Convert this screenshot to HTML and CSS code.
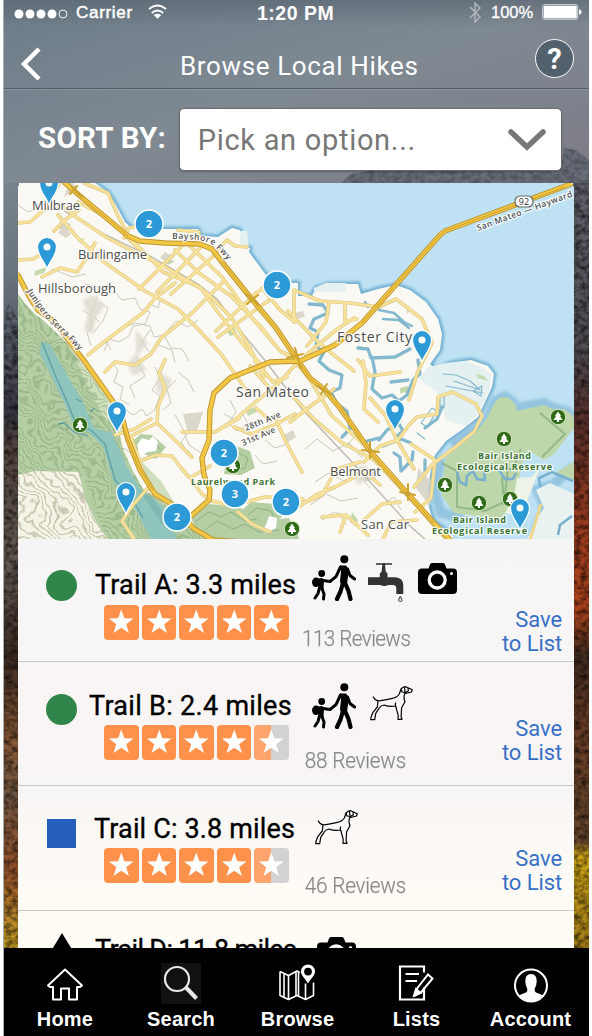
FILE: index.html
```html
<!DOCTYPE html>
<html lang="en">
<head>
<meta charset="utf-8">
<title>Browse Local Hikes</title>
<link rel="stylesheet" href="styles.css">
</head>
<body>
<svg class="defs" width="0" height="0" aria-hidden="true">
  <defs>
    <symbol id="star" viewBox="0 0 34 34"><path fill="#fff" d="M17 4.500l3.100 8.600 9 .3-7.200 5.500 2.700 8.800L17 22.500l-7.600 5.200 2.700-8.800-7.200-5.500 9-.3z"/></symbol>
    <symbol id="hikers" viewBox="0 0 44 46">
      <circle cx="32.300" cy="4.300" r="4"/><circle cx="9.700" cy="18.500" r="3.400"/><ellipse cx="4" cy="27.300" rx="4" ry="4.800"/>
      <path d="M28 10.500h6l3 4-2 14-6 1-1-3 1-10zM6 23.500l4-.5 2 2-.5 9-5 1z"/>
      <g fill="none" stroke="#000" stroke-linejoin="round" stroke-linecap="round"><path stroke-width="3" d="M28.500 12L24 21.700 18 26.500l-7-1M35.500 14l2.500 6.500 4.500 3.500"/><path stroke-width="4.200" d="M31 28l-2.500 8.500-3.500 7.500M33 28l3.500 8 2 8"/><path stroke-width="3" d="M7.500 33L6 38.500 3 43M10 33.500l2 5.500-.5 5"/></g>
    </symbol>
    <symbol id="tap" viewBox="0 0 37 39">
      <path fill="#333" d="M8 .3h6q1.700-.9 3.500 0H24v1.500h-7l.8 6.900 1.700 1.800v3.800H27q8.500.3 8.300 8.700v8h-7v-5.500q0-3.500-3-3.500h-4.800q-4 2-8.500 0H0v-7.700h11.800v-3.800l1.700-1.800.9-6.900H8z"/>
      <path d="M32.300 33.300l1.500 3a1.700 1.700 0 1 1-3 0z" fill="#ddd" stroke="#333" stroke-width="1"/>
    </symbol>
    <symbol id="camera" viewBox="0 0 39 31">
      <path d="M10.500 5.500l1.500-4Q12.500 0 14 0h11q1.500 0 2 1.500l1.500 4H35q4 0 4 4V27q0 4-4 4H4q-4 0-4-4V9.500q0-4 4-4z"/>
      <circle cx="19.200" cy="17" r="8" fill="none" stroke="#fff" stroke-width="3.300"/><circle cx="33.500" cy="10.500" r="1.500" fill="#fff"/>
    </symbol>
    <symbol id="dog" viewBox="-1 0 44 35">
      <path fill="none" stroke="#000" stroke-width="1.200" stroke-linejoin="round" stroke-linecap="round" d="M2.300 11q2 3.500 5 4 4-.5 14-2.700 5-1 7-4.300l1.700-5Q32 .6 34.700.7l2.300 1 4.300 2-.8 2.300-4 1-2.800.7q-1.500 4 .3 8l-3.400 6-.5 9.300 1 2.300H27l.2-4-1.500-5.500-1-3.800q-6 1.300-11.700-1-3.500.5-5 3.300l-3.300 5-1 6.400H-.3l.3-2.400 2-5 4.300-5.300q.5-3.500.7-6.700M24.700 20.700q-.8-2.500 0-3.700M33.500 1.500l.5 5 3.300-1.500-.3-3M30 3l1 3 3 .5"/>
    </symbol>
    <symbol id="pin" viewBox="-12 -34 24 36">
      <path fill="#2b9ad6" stroke="#fff" stroke-width="1.200" d="M0 0C-2-7-9.500-13-9.500-22A9.500 9.500 0 0 1 9.500-22C9.500-13 2-7 0 0z"/><circle cy="-22" r="3.500" fill="#fff"/>
    </symbol>
    <g id="tree"><circle r="7.700" fill="#2f6b17" stroke="#d7e6c4"/><path fill="#fff" d="M0-5.500L3-1H2l2.500 4H1v2h-2V3h-3.500L-2-1h-1z"/></g>
    <filter id="rock" x="0" y="0" width="100%" height="100%">
      <feTurbulence type="fractalNoise" baseFrequency=".16 .2" numOctaves="4" seed="8" result="n"/>
      <feColorMatrix in="n" values="0 0 0 0 0  0 0 0 0 0  0 0 0 0 0  1.800 0 0 0 -.6" result="m"/>
      <feComposite in="m" in2="SourceGraphic" operator="in"/>
    </filter>
    <filter id="warp" x="0" y="0" width="100%" height="100%">
      <feTurbulence type="fractalNoise" baseFrequency=".035" numOctaves="3" seed="4" result="t"/>
      <feDisplacementMap in="SourceGraphic" in2="t" scale="42" xChannelSelector="R" yChannelSelector="G"/>
    </filter>
    <filter id="soft"><feGaussianBlur stdDeviation="1.800"/></filter>
    <clipPath id="forest"><path d="M18 294q12 18 24 25l24 23 13 18 24 33 14 30 6 26 10 22 10 18 26 17 43 33H108l-13-28-11-34H18z"/></clipPath>
    <clipPath id="bluff"><path d="M18 475l18-4 43 1 6 27 13 27 13 18H18z"/></clipPath>
    <pattern id="contour" width="6" height="6" patternUnits="userSpaceOnUse" patternTransform="rotate(42)"><path d="M0 3H6" stroke="#719568" stroke-width="1"/></pattern>
    <pattern id="hills" width="7" height="7" patternUnits="userSpaceOnUse" patternTransform="rotate(55)"><path d="M0 3H7" stroke="#999779" stroke-width="1.200"/></pattern>
    <linearGradient id="sky" x2="1" y2="1"><stop stop-color="#6c7c88"/><stop offset=".5" stop-color="#7f8992"/><stop offset="1" stop-color="#7d7b86"/></linearGradient>
    <linearGradient id="left" x2="0" y2="1"><stop stop-color="#77838c"/><stop offset=".12" stop-color="#69737c"/><stop offset=".2" stop-color="#555a66"/><stop offset=".3" stop-color="#3b3b45"/><stop offset=".35" stop-color="#55453f"/><stop offset=".5" stop-color="#625852"/><stop offset=".62" stop-color="#3b2b21"/><stop offset=".73" stop-color="#875835"/><stop offset=".8" stop-color="#6e5540"/><stop offset=".9" stop-color="#9a552b"/><stop offset="1" stop-color="#c8a125"/></linearGradient>
    <linearGradient id="right" x2="0" y2="1"><stop stop-color="#62636d"/><stop offset=".22" stop-color="#504c52"/><stop offset=".32" stop-color="#5c3029"/><stop offset=".45" stop-color="#9d3d20"/><stop offset=".56" stop-color="#ab421c"/><stop offset=".62" stop-color="#3d2b20"/><stop offset=".7" stop-color="#6a3c25"/><stop offset=".86" stop-color="#66472c"/><stop offset=".88" stop-color="#d1a717"/><stop offset="1" stop-color="#a17b18"/></linearGradient>
  </defs>
</svg>

<div class="phone">
  <svg class="backdrop" viewBox="4 0 585 1036" aria-hidden="true">
    <path fill="url(#sky)" d="M4 0h585v183H4z"/>
    <path fill="url(#left)" d="M4 183h15v765H4z"/><path fill="url(#right)" d="M573 183h16v765h-16z"/>
    <path fill="#686d78" d="M341 183l10-9 26-5 185-8 2-13 12 2 13 10v23z"/>
    <path filter="url(#rock)" opacity=".3" d="M341 183l10-9 26-5 185-8 2-13 12 2 13 10v23z"/>
    <path filter="url(#rock)" opacity=".7" d="M4 315l5-12 10 20v625H4zM573 183h16v765h-16z"/>
  </svg>

  <header class="top">
    <div class="status">
      <svg class="signal" viewBox="0 0 54 12"><g fill="#fff"><circle cx="5" cy="6" r="4.500"/><circle cx="16" cy="6" r="4.500"/><circle cx="27" cy="6" r="4.500"/><circle cx="38" cy="6" r="4.500"/></g><circle cx="49" cy="6" r="4" fill="none" stroke="#fff" stroke-width=".9"/></svg>
      <span class="carrier">Carrier</span>
      <svg class="wifi" viewBox="0 0 20 15" fill="none" stroke="#fff" stroke-width="2"><path d="M1 5q9-7.500 18 0M4 9q6-5 12 0"/><path fill="#fff" stroke="none" d="M6 11.300q4-3 8 0L10 15z"/></svg>
      <strong class="clock">1:20 PM</strong>
      <svg class="bluetooth" viewBox="0 0 13 21" fill="none" stroke="#aeb5bb" stroke-width="1.500"><path d="M1 5l10 10-5 5V1l5 5L1 16"/></svg>
      <span class="percent">100%</span>
      <svg class="battery" viewBox="0 0 40 16"><rect x=".7" y=".7" width="35" height="14.600" rx="2" fill="none" stroke="#d3d8dc" stroke-width="1"/><path fill="#fff" d="M1.700 1.700h33v12.600h-33z"/><path fill="#fff" d="M37 5.500q2.500 0 2.500 2.500T37 10.500z"/></svg>
    </div>
    <div class="titlebar">
      <svg class="back" viewBox="0 0 22 34"><path d="M19 2L4 17l15 15" fill="none" stroke="#fff" stroke-width="4.500"/></svg>
      <h1 class="title">Browse Local Hikes</h1>
      <span class="help">?</span>
    </div>
  </header>

  <div class="sort">
    <span class="sort-label">SORT BY:</span>
    <div class="select"><span class="placeholder">Pick an option...</span>
      <svg class="chevron" viewBox="0 0 38 22"><path d="M3 3l16 15L35 3" fill="none" stroke="#777" stroke-width="5.500" stroke-linecap="round"/></svg>
    </div>
  </div>

  <main class="panel">
    <svg class="map" viewBox="18 183 556 356" role="img">
      <path fill="#bee2f3" d="M18 183h556v356H18z"/>
      <path fill="none" stroke="#70afd2" stroke-width="5" filter="url(#soft)" d="M95 183l13 9 8 13 9 17 8 7h65l3 7 17 1 14-9 8 2v15l10 3-1 4 17 23 24 8h8v13h14l4-8 14-4h28l3 10 17-5 18-4 14 5 16 12 12 17 4 15-2 16-10 14 6 6 15-7 20-3 17 6 6 8-2 13-14 30-15 12-17 12-11 14-5 20-2 28 5 18 20 14"/>
      <path fill="#fbf9f3" d="M18 183h77l13 9 8 13 9 17 8 7h65l3 7 17 1 14-9 8 2v15l10 3-1 4 17 23 24 8h8v13h14l4-8 14-4h28l3 10 17-5 18-4 14 5 16 12 12 17 4 15-2 16-10 14 6 6 15-7 20-3 17 6 6 8-2 13-14 30-15 12-17 12-11 14-5 20-2 28 5 18 20 14v16H18z"/>
      <path fill="#e5f0f1" d="M428 367l18-4 18-2 16 5 11 8-1 14-12 26-12 12-20-6-9-28-18-13zM240 231v15l9 3-2-18zM314 288l12-5h20v9h-32z"/>

      <!-- contour shading in the central hills -->
      <g fill="none" stroke="#c9c9bb" stroke-width="1">
        <path d="M85 284l13 3 5 9 12-4 7 8 13-2 5 11 10 3-5 12-12 2-4 10-10 6-10-3-5 12M83 310l7 5 2 11-5 7 4 13M100 302l8 6-5 13-10 12M152 305l6 3 2-7M124 327l12-4 14 3 4 11 10-2 7 13 11 1 7 12M127 410q6 8 11 2t8 4l8-5 6-15-8-6 8-12-5-11M150 330l-8 12 8 11-12 10 7 13-15 10 5 12M175 415l8 14 6 16 12 8M190 430l-9 12 9 14M224 414l12 6 7-5 5 9 12-1 8 8M305 449l12-10 16 12 16-8 14 16M315 482l14-9 15 8 14-7 12 14M310 505l16-11 15 7 17-3M322 520l12-8 16 5M338 513l9 12M110 455l14-7 12 9M98 295l-7 18 8 9M18 205l10 7 12-5M43 278l10-9 19 8 14-3M158 345l14 5 3 13M230 400l6 12-8 11 9 8 8-4M345 448l10-12 11 9M382 505l12-8 7 13M112 362l6 8-4 12 9 5-3 12 9 6M178 372l10 8 6 12M176 380l-9 9 4 14-8 7M168 330l8-9 12 6 10-7M105 340l6 10M265 440l10 8 12-4M255 455l8 9 14-3"/>
      </g>
      <g fill="#d9d8ca" opacity=".75" filter="url(#soft)"><path d="M82 300l12-5 11 11-8 10-5 18-8-4 4-17zM136 330l12 13-10 12 8 15-13 6-6-12 9-11zM350 468l17-3 4 12-13 8zM158 370l14 10-8 18-8-8z"/></g>

      <!-- western watershed -->
      <path fill="#b5cea3" d="M18 294q12 18 24 25l24 23 13 18 24 33 14 30 6 26 10 22 10 18 26 17 43 33H18z"/>
      <path fill="#cfdebc" d="M76 360l18 14 23 31 5 27-19-16-17-34zM140 460l21 21 16 26-17-11-15-22z"/>
      <g clip-path="url(#forest)"><g filter="url(#warp)"><path fill="url(#contour)" opacity=".75" d="M0 270h250v290H0z"/></g></g>
      <path fill="#b5cea3" d="M191 518l18-14 30 3 15 10 20 3 15-2 11 22h-99zM226 460l7-15 17 6 5 17-14 7-17-1zM129 444l12-10 11 1 14 12-10 12-14-6zM242 510l9-8 24 2 7 13-16 11-16-7z"/>
      <path fill="none" stroke="#8fb081" stroke-width="1" d="M195 522l14-10 12 5 10-5 14 9 12-2M205 530l12-9 16 8 12-5 14 8 20-2M135 451l6-10 10-1 10 10M232 458l7-5 9 5-3 10-9 2M248 515l9-7 14 3 4 8"/>
      <path fill="#fff" d="M137 445l5-7 7 2 4-4 5 6-2 9-8 1-8 4zM266 525l3-9 8 2-1 10-8 5-6-2z"/>
      <path fill="#8fc5bc" d="M42 342l8 2 18 33 14 23 12 28 18 5 15 34 16 25 20 14 14 33h-26l-19-36-18-20-11-36-13-14-16-6-8-20-13-27-14-28z"/>
      <path fill="none" stroke="#5f9fa3" stroke-width="1.300" d="M42 342l14 35 12 27 8 20 15 6 14 14 10 36 18 20 10 18M58 424l6-1 10 9 14 4M82 402l-6-3M90 412l5-4"/>
      <path fill="#6fabaa" opacity=".5" d="M137 488l16 10 17 28-8-2-16-24z"/>
      <path fill="#f5f2e6" d="M18 475l18-4 43 1 6 27 13 27 13 18H18z"/>
      <g clip-path="url(#bluff)"><g filter="url(#warp)"><path fill="url(#hills)" opacity=".8" d="M0 440h140v120H0z"/></g></g>
      <path fill="#dcd7cb" d="M183 414l20-2-7 22-8-1zM70 180l8 8-14 9zM63 226l8 8-5 4-8-5zM60 220l11 4-4 9-9-5zM295 313l8-2 2 6-8 2zM165 252l9 5-6 6-8-5zM284 435l9-5 3 7-8 5zM360 470l13-2 3 10-11 4zM406 305l6 4-5 5zM418 468l14 14-2 24-14-18z"/>
      <path fill="#c4d9ae" d="M77 240l8-2-4 6zM35 271l12-4-3 6-10 3zM166 260l9 1-7 4zM226 330l8-4 3 8-7 2zM246 411l9-4 2 5-9 4zM400 388l8-2 2 10-6-4-4 2zM476 374l8 2 4 5-10-3zM352 512l6 8-2 7-6-5z"/>

      <!-- Bair Island -->
      <path fill="none" stroke="#80b5d5" stroke-width="10" opacity=".65" filter="url(#soft)" d="M574 466l-20 18-17 6 8 18-13 31M452 446l35-25 8-20 10-5 8 6 3 6 15-3 13-2 10 5 13 3 7 8M442 459l-8 30 7 24 22 5"/>
      <path fill="#bed7aa" d="M445 460l7-13 21-11 14-18 8-16 6-5 8 1 7 7 1 6 14-3 13-3 11 5 9-1 6 4 4 5v10l-20 26-10 6-16-10-7 17-5 37-17 15-45-6-12-17z"/>
      <path fill="none" stroke="#93b887" stroke-width="2" d="M442 463l15 8v36l28 4 19-9 4-33M457 471l28-4 28 2 8-20M540 413l25 21-23 23M502 477l2 28"/>
      <path fill="#e9f2f1" d="M536 490l14-7 24 11v45h-47l8-18 9-13z"/><path fill="#bed7aa" d="M556 472l18-10v18z"/>
      <path fill="#edf3e7" d="M517 478l15-1 9-12-11 29-10 22-15-3 9-17z"/>
      <path stroke="#edd78a" stroke-width="3" d="M541 504l-11 36"/>
      <path fill="none" stroke="#78aece" stroke-width="2.500" d="M457 472l3 10 6 3 1-9 6-5 4 8 8 1-1-9M499 470l6 9 8 0 3-6M540 487l-1-9 13-6 21 9M558 535l2-10 12-9"/>

      <!-- lagoons -->
      <g fill="none" stroke="#83b9ce" stroke-width="3.300" stroke-linejoin="round" stroke-linecap="round">
        <path d="M309 304l14 1 5 8-14 6-4 9 8 4-2 14 8 6-5 9 10 9 13 5-2 13-9 4 6 12 10 7 3 18-8 8M358 348l10 1 3 9 24-1 15-8M372 357l3 15-3 17 10 9 10-3 7 6 8-6 6-15 7-6-2-14M391 382l17-2M379 440l8-10 12-6 4 7-7 6M383 446l18-7 10 4M394 453l6 4 1 14 11-11 1-8M425 428l12-9 5-12M367 441l12-3M425 460v14"/>
        <path d="M379 310l15 3 10 9 8 4M383 319l16 1 10 8M368 307l-3-5" stroke-width="2.500"/>
        <path stroke-width="1.200" d="M443 374l13 1 14 6 10 9-26-9M446 386l37 7M473 391l9-5-1 10zM421 423l11-15 5 3-10 16zM417 433l8 6M440 397v11M444 396v12"/>
      </g>

      <!-- casing and fill share each road path -->
      <defs>
        <path id="streets" d="M18 260l15-1 20-11M18 223l12-1 16-14 13-24M84 183l24 10 10 23 7 13M62 205l14 12 30 20 24 13 37 18 39 24 25 25 19 31 14 29M58 215l18 21 28 26 41 29 33 18 20 20 23 25 28 40M54 231l12-12 13-9M42 277l18-9 17 4 10-15 8-14M78 202l30 16 31 31M124 238l5-10 11-2M178 230l21 2-1 12M218 249l9-9 8 6 12 1M120 229l23 22 20 21 37 15 17 24 29 37 18 20M88 355l16-13 20-15 20-15 11-14 20-15M105 372l10-10 20 3 16-11 10-16 31-25 31-31M165 360l-6 13 6 15-7 19-1 16-26 13M139 289l28-28 14-14M157 292l44-45M171 294l46-41M175 250l24 23 32 23 31 32 18 23 21 10M190 246l32 31 30 41 23 27M216 331l40-38 23-14M218 337l50-36M262 288l18 22 15 12M294 322v-32l26 11 30 2 29 4 17-8 26 20 10 24-14 28-9 29M288 311l26 27 16 14 24 19M329 303l-3 19-19 24M345 303v18l12-2M290 356l19 22 23 38 37 33M291 394l21 23 29 25 33 18 34 36 38 43M290 422l22-17 22-16M230 424l28-24 21-17 18-20M234 427l17 7 21-8 23-12M182 432h33l23-13M157 423l21 20 14 14M364 462l16-16 18-6 11-15 8-8 20-3 1-17 14-5 24 12 6 12-8 16-20 16-21 16-19 23M370 398l15 17 12 25 17 29M411 444l24 16-4 38-16 14M363 361l3 22-2 26 14 13M400 372l-30 4-12-16M290 513l26-18 19-8 16-8 13-8 16 14M147 489l-15 17-10 15 12 18M150 489l-8-20-6-18-5-15M140 461l16-6 16 1 10 13 8 9 20-12M115 435l20-6 16-10M190 478l12 16 10 7 22 5M235 505l30-8 38 2M276 420l11 24 15 28M306 355l30-25 18-12M250 366l24 27M255 361l18 21 14-5M322 517l24-2 22 20M340 532l6-17M364 520l18-16 18-2M383 539l8-17 26-2M238 512l14 12 18 8M256 408l15 13M215 432l16-10 8-4M303 503l19-8 14-26 24-7"/>
        <path id="highways" d="M65 183l15 13 48 40 12 5 25 2 35 1 12 5 10 13 28 35 26 31 20 30 14 20 15 12 15 18 30 43 37 42 27 30 18 19M571 184l-126 47-5 4-78 88-27 22-35 16-30 1-40 16-16 15-4 17-1 30-7 18 2 17 6 15-1 10-18 16M18 275l12 23 8 12 17 12 17 23 13 17 22 31 14 20 7 27 12 30 15 24 20 12 18 22 20 12 30 2"/>
      </defs>
      <g fill="none" stroke-linejoin="round" stroke-linecap="round">
        <path stroke="#b9b7b0" stroke-width="1.300" d="M64 211l38 22 50 24 46 27 19 15 22 30 24 29 39 51 51 54 57 63 25 22"/>
        <use href="#streets" stroke="#dcc683" stroke-width="3.600"/>
        <use href="#streets" stroke="#f7e29a" stroke-width="2.400"/>
        <use href="#highways" stroke="#ba942f" stroke-width="5.400"/>
        <use href="#highways" stroke="#f3c644" stroke-width="3.600"/>
        <path stroke="#c59a2f" stroke-width=".9" d="M75 192l53 44M222 262l28 35 26 31 20 30 14 20 15 12 15 18 30 43 37 42 27 30M565 187l-120 44-5 4-78 88M117 405l8 28 13 33 15 24"/>
        <path stroke="#cda22e" stroke-width="2" d="M70 194l7-8M72 187l10 10M247 294l11 11M247 304l11-9M287 358l16-4M295 348l6 20M318 386l12 8M321 394l6-10M362 450l17 2M370 442v16M400 492l15 3M408 484v16"/>
      </g>

      <g class="place">
        <text x="32" y="210" textLength="48">Millbrae</text><text x="78" y="259" textLength="69">Burlingame</text><text x="38" y="293" textLength="78">Hillsborough</text>
        <text class="city" x="337" y="342" textLength="75">Foster City</text><text class="city" x="236" y="397" textLength="73">San Mateo</text><text x="330" y="476" textLength="51">Belmont</text><text x="361" y="529" textLength="48">San Car</text>
      </g>
      <g class="road">
        <path id="juni" fill="none" d="M27 291q15 25 28 36t29 29"/><text textLength="80"><textPath href="#juni">Junipero Serra Fwy</textPath></text>
        <path id="bay" fill="none" d="M172 239q33-1 42 7t17 19"/><text textLength="63"><textPath href="#bay">Bayshore Fwy</textPath></text>
        <text transform="translate(246 431) rotate(-22)" textLength="38">28th Ave</text><text transform="translate(243 446) rotate(-23)" textLength="36">31st Ave</text>
        <text transform="translate(478 231) rotate(-20)" textLength="101">San Mateo — Hayward</text>
      </g>
      <rect x="515" y="196" width="18" height="11" rx="5" fill="#fff" stroke="#666" stroke-width="1.200"/><text class="shield" x="524" y="205">92</text>
      <g class="park">
        <use href="#tree" x="80" y="425"/><use href="#tree" x="233" y="466"/><use href="#tree" x="292" y="529"/><use href="#tree" x="504" y="439"/><use href="#tree" x="558" y="417"/><use href="#tree" x="445" y="485"/><use href="#tree" x="479" y="503"/><use href="#tree" x="510" y="499"/>
        <text x="191" y="485" textLength="84">Laurelwood Park</text>
        <text x="478" y="459" textLength="53">Bair Island</text><text x="457" y="470" textLength="95">Ecological Reserve</text>
        <text x="453" y="523" textLength="53">Bair Island</text><text x="432" y="534" textLength="95">Ecological Reserve</text>
      </g>
      <use href="#pin" x="37" y="171" width="24" height="36"/><use href="#pin" x="35" y="235" width="24" height="36"/><use href="#pin" x="105" y="399" width="24" height="36"/><use href="#pin" x="114" y="480" width="24" height="36"/><use href="#pin" x="410" y="328" width="24" height="36"/><use href="#pin" x="383" y="397" width="24" height="36"/><use href="#pin" x="508" y="496" width="24" height="36"/>
      <g class="cluster">
        <circle cx="149" cy="224" r="14"/><text x="149" y="228">2</text><circle cx="277" cy="285" r="14"/><text x="277" y="289">2</text><circle cx="224" cy="453" r="14"/><text x="224" y="457">2</text><circle cx="235" cy="494" r="14"/><text x="235" y="498">3</text><circle cx="286" cy="502" r="14"/><text x="286" y="506">2</text><circle cx="177" cy="517" r="14"/><text x="177" y="521">2</text>
      </g>
    </svg>

    <section class="trails">
      <article class="trail trail-a">
        <span class="level easy"></span>
        <div class="info"><h2 class="name">Trail A: 3.3 miles</h2><div class="stars"><svg class="star"><use href="#star"/></svg><svg class="star"><use href="#star"/></svg><svg class="star"><use href="#star"/></svg><svg class="star"><use href="#star"/></svg><svg class="star"><use href="#star"/></svg></div></div>
        <div class="extras"><div class="icons"><svg class="i-hikers"><use href="#hikers"/></svg><svg class="i-tap"><use href="#tap"/></svg><svg class="i-camera"><use href="#camera"/></svg></div><span class="reviews">113 Reviews</span></div>
        <a class="save">Save<br>to List</a>
      </article>
      <article class="trail trail-b">
        <span class="level easy"></span>
        <div class="info"><h2 class="name">Trail B: 2.4 miles</h2><div class="stars"><svg class="star"><use href="#star"/></svg><svg class="star"><use href="#star"/></svg><svg class="star"><use href="#star"/></svg><svg class="star"><use href="#star"/></svg><svg class="star half"><use href="#star"/></svg></div></div>
        <div class="extras"><div class="icons"><svg class="i-hikers"><use href="#hikers"/></svg><svg class="i-dog"><use href="#dog"/></svg></div><span class="reviews">88 Reviews</span></div>
        <a class="save">Save<br>to List</a>
      </article>
      <article class="trail trail-c">
        <span class="level medium"></span>
        <div class="info"><h2 class="name">Trail C: 3.8 miles</h2><div class="stars"><svg class="star"><use href="#star"/></svg><svg class="star"><use href="#star"/></svg><svg class="star"><use href="#star"/></svg><svg class="star"><use href="#star"/></svg><svg class="star half"><use href="#star"/></svg></div></div>
        <div class="extras"><div class="icons"><svg class="i-dog"><use href="#dog"/></svg></div><span class="reviews">46 Reviews</span></div>
        <a class="save">Save<br>to List</a>
      </article>
      <article class="trail trail-d">
        <span class="level hard"></span>
        <div class="info"><h2 class="name">Trail D: 11.8 miles</h2></div>
        <div class="extras"><div class="icons"><svg class="i-camera"><use href="#camera"/></svg></div></div>
      </article>
    </section>
  </main>

  <nav class="tabs">
    <a class="tab"><svg viewBox="0 0 40 40" fill="none" stroke="#fff" stroke-width="2"><path d="M20 6L3 22l2 1.500h3V36h8V25h8v11h8V23.500h3l2-1.500z" stroke-linejoin="round"/></svg>Home</a>
    <a class="tab"><svg class="search" viewBox="0 0 40 40" fill="none" stroke="#e8e8e8"><circle cx="16" cy="15.500" r="12" stroke-width="2.200"/><path d="M25 24l10.500 11" stroke-width="4"/></svg>Search</a>
    <a class="tab"><svg viewBox="0 0 40 40" fill="none" stroke="#fff" stroke-width="1.600" stroke-linejoin="round"><path d="M2 8v24l8.500 4 8.500-4 8.500 4 8-4V19M2 8l8.500 4L19 7.500l3 1.500M10.500 12v24M18 8v24M20.500 9v23M27.500 20v16M6 11v23"/><path fill="#fff" stroke="none" fill-rule="evenodd" d="M30 20C27.500 15 23 12.500 23 8a7 7 0 0 1 14 0c0 4.500-4.500 7-7 12zM30 4.200a3.900 3.900 0 1 0 0 7.800 3.900 3.900 0 0 0 0-7.800z"/></svg>Browse</a>
    <a class="tab"><svg viewBox="0 0 40 40" fill="none" stroke="#fff" stroke-width="2"><path d="M27 9V3H3v33h24V24M8.500 10.500H22M8.500 17.500H20" stroke-width="2.200"/><path d="M20 25l11-14 4.500 4L24 29l-6 3z"/><path d="M17 32l2-6.500 4.500 4z" fill="#fff"/></svg>Lists</a>
    <a class="tab"><svg class="avatar" viewBox="0 0 40 40"><circle cx="20" cy="22" r="16" fill="none" stroke="#fff" stroke-width="2"/><path fill="#fff" d="M7 32.500q3-2 8-3.500 2-1.500 1-4.500-1.500-2-1.700-6.500-.3-7.500 5.700-7.500t5.700 7.500q-.2 4.500-1.700 6.500-1 3 1 4.500 5 1.500 8 3.500-5 5.500-13 5.500t-13-5.500z"/></svg>Account</a>
  </nav>
</div>
</body>
</html>
```
FILE: styles.css
```css
* { box-sizing: border-box; }
body { margin: 0; background: #fff; font-family: Roboto, "Liberation Sans", sans-serif; }
.defs { position: absolute; }
.phone { position: relative; width: 586px; height: 1036px; margin-left: 3px; border-left: 1px solid #a8afb4; overflow: hidden; display: flex; flex-direction: column; isolation: isolate; }
.backdrop { position: absolute; inset: 0; width: 585px; height: 1036px; z-index: -1; }
svg { display: block; flex: none; }
h1, h2 { margin: 0; font-weight: 400; }

.top { height: 89px; border-bottom: 1px solid #515c67; box-shadow: 0 1px #8b959e; color: #fff; flex: none; }
.status { height: 27px; display: flex; align-items: center; background: linear-gradient(#56626d99, #6f7c8700); font-family: "Liberation Sans", sans-serif; }
.signal { width: 54px; height: 12px; margin-left: 10px; }
.carrier { width: 57px; margin: -1px 0 0 8px; font-size: 17px; -webkit-text-stroke: .5px; letter-spacing: .7px; }
.wifi { width: 19px; height: 15px; margin: -4px 0 0 15px; }
.clock { width: 82px; margin-left: 90px; font-size: 19.500px; letter-spacing: .5px; white-space: nowrap; }
.bluetooth { width: 13px; height: 21px; margin: -2px 0 0 130px; }
.percent { width: 44px; margin: -3px 0 0 9px; font-size: 16.500px; -webkit-text-stroke: .3px; }
.battery { width: 40px; height: 16px; margin: -4px 0 0 7px; }
.titlebar { height: 61px; display: flex; align-items: center; }
.back { width: 22px; height: 34px; margin: 12px 0 0 16px; }
.title { width: 245px; margin: 16px 0 0 138px; font-size: 26px; letter-spacing: .63px; white-space: nowrap; }
.help { width: 39px; height: 39px; margin: 2px 0 0 110px; border: 1px solid #fff; border-radius: 50%; background: #53616d; font: 700 29px/38px Roboto, sans-serif; text-align: center; }

.sort { height: 94px; padding: 19px 27px 0 34px; display: flex; flex: none; }
.sort-label { width: 141px; color: #fff; font-size: 29.500px; font-weight: 700; line-height: 60px; letter-spacing: .25px; white-space: nowrap; }
.select { width: 384px; height: 63px; padding: 0 15px 0 18px; border: 1px solid #6c6c70; border-radius: 5px; background: #fff; box-shadow: 0 1px 2px #0004; display: flex; align-items: center; justify-content: space-between; }
.placeholder { color: #777; font-size: 29px; letter-spacing: .7px; white-space: nowrap; }
.chevron { width: 38px; height: 22px; }

.panel { width: 556px; height: 765px; margin-left: 14px; flex: none; overflow: hidden; }
.map { width: 556px; height: 356px; border-radius: 5px 5px 0 0; overflow: hidden; }
.map text { font-family: "Open Sans", sans-serif; paint-order: stroke; stroke: #fffc; stroke-width: 2.500px; }
.place text { font-size: 13px; fill: #4d4d4d; }
.place .city { font-size: 14px; }
.road text { font-size: 8.500px; font-weight: 600; fill: #555; }
.map .shield { font-size: 9px; fill: #333; text-anchor: middle; stroke: none; }
.park text { font-size: 9px; font-weight: 700; fill: #3a7332; }
.cluster circle { fill: #2b9ad6; stroke: #fff; stroke-width: 1.500px; }
.map .cluster text { fill: #fff; stroke: none; font: 700 11px "Open Sans", sans-serif; text-anchor: middle; }

.trails { background: linear-gradient(#f6f5f6, #f8f5f4 40%, #f8f6f4 60%, #fffcf6 90%); height: 409px; }
.trail { display: grid; grid-template-columns: 70px 214px 170px 1fr; border-bottom: 1px solid #c8c6c6; }
.trail-a { height: 123px; padding-top: 16px; }
.trail-b { height: 124px; padding-top: 15px; }
.trail-c { height: 125px; padding-top: 14px; }
.trail-d { height: 37px; padding-top: 11px; border: 0; overflow: hidden; }
.level { justify-self: end; }
.easy { width: 31px; height: 31px; margin: 15px 11px 0 0; border-radius: 50%; background: #30864a; }
.trail-b .easy { margin-top: 17px; }
.medium { width: 29px; height: 29px; margin: 19px 12px 0 0; background: #245fbd; }
.hard { width: 34px; height: 28px; margin: 11px 9px 0 0; background: #000; clip-path: polygon(50% 0, 100% 100%, 0 100%); }
.name { height: 50px; padding-left: 7px; font-size: 27px; line-height: 60px; letter-spacing: .15px; white-space: nowrap; -webkit-text-stroke: .35px; }
.trail-b .name { height: 48px; padding-left: 1px; line-height: 58px; letter-spacing: .3px; }
.trail-c .name { height: 48px; padding-left: 6px; line-height: 58px; }
.trail-d .name { letter-spacing: -.65px; line-height: 57px; }
.stars { display: flex; gap: 3px; padding-left: 16px; }
.star { width: 34.500px; height: 34.500px; border-radius: 4px; background: #ff914b; }
.half { background: linear-gradient(90deg, #ffa46c 50%, #d3d2d3 50%); }
.icons { display: flex; height: 70px; padding-left: 10px; }
.i-hikers { width: 44px; height: 46px; }
.i-tap { width: 37px; height: 39px; margin: 8px 0 0 12px; }
.i-camera { width: 39px; height: 31px; margin: 8px 0 0 13px; }
.i-dog { width: 44px; height: 35px; margin: 9px 0 0 14px; }
.trail-b .icons { padding-top: 6px; height: 70px; }
.trail-b .i-dog { margin-top: 3px; }
.trail-c .icons { padding: 2px 0 0 13px; height: 72px; }
.trail-c .i-dog { margin: 8px 0 0; }
.trail-d .i-camera { margin: 15px 0 0 5px; }
.reviews { display: block; color: #8a8a8a; font-size: 22px; line-height: 28px; font-weight: 300; letter-spacing: -.6px; -webkit-text-stroke: .25px; white-space: nowrap; transform: scaleX(.94); transform-origin: 0 0; }
.trail-b .reviews, .trail-c .reviews { padding-left: 3px; letter-spacing: -.2px; }
.save { justify-self: end; margin: 53px 12px 0 0; color: #3970c7; font-size: 22px; line-height: 23.500px; letter-spacing: -.1px; text-align: right; white-space: nowrap; }
.trail-b .save { margin-top: 40px; }
.trail-c .save { margin-top: 47px; }

.tabs { height: 88px; flex: none; padding: 15px 0 0 2px; background: #000; display: grid; grid-template-columns: 118px 114px 119px 119px 109px; }
.tab { display: flex; flex-direction: column; align-items: center; color: #fff; font: 700 20px/31px "Liberation Sans", sans-serif; letter-spacing: .2px; white-space: nowrap; }
.tab svg { width: 40px; height: 41px; }
.search { background: #111; }
```
